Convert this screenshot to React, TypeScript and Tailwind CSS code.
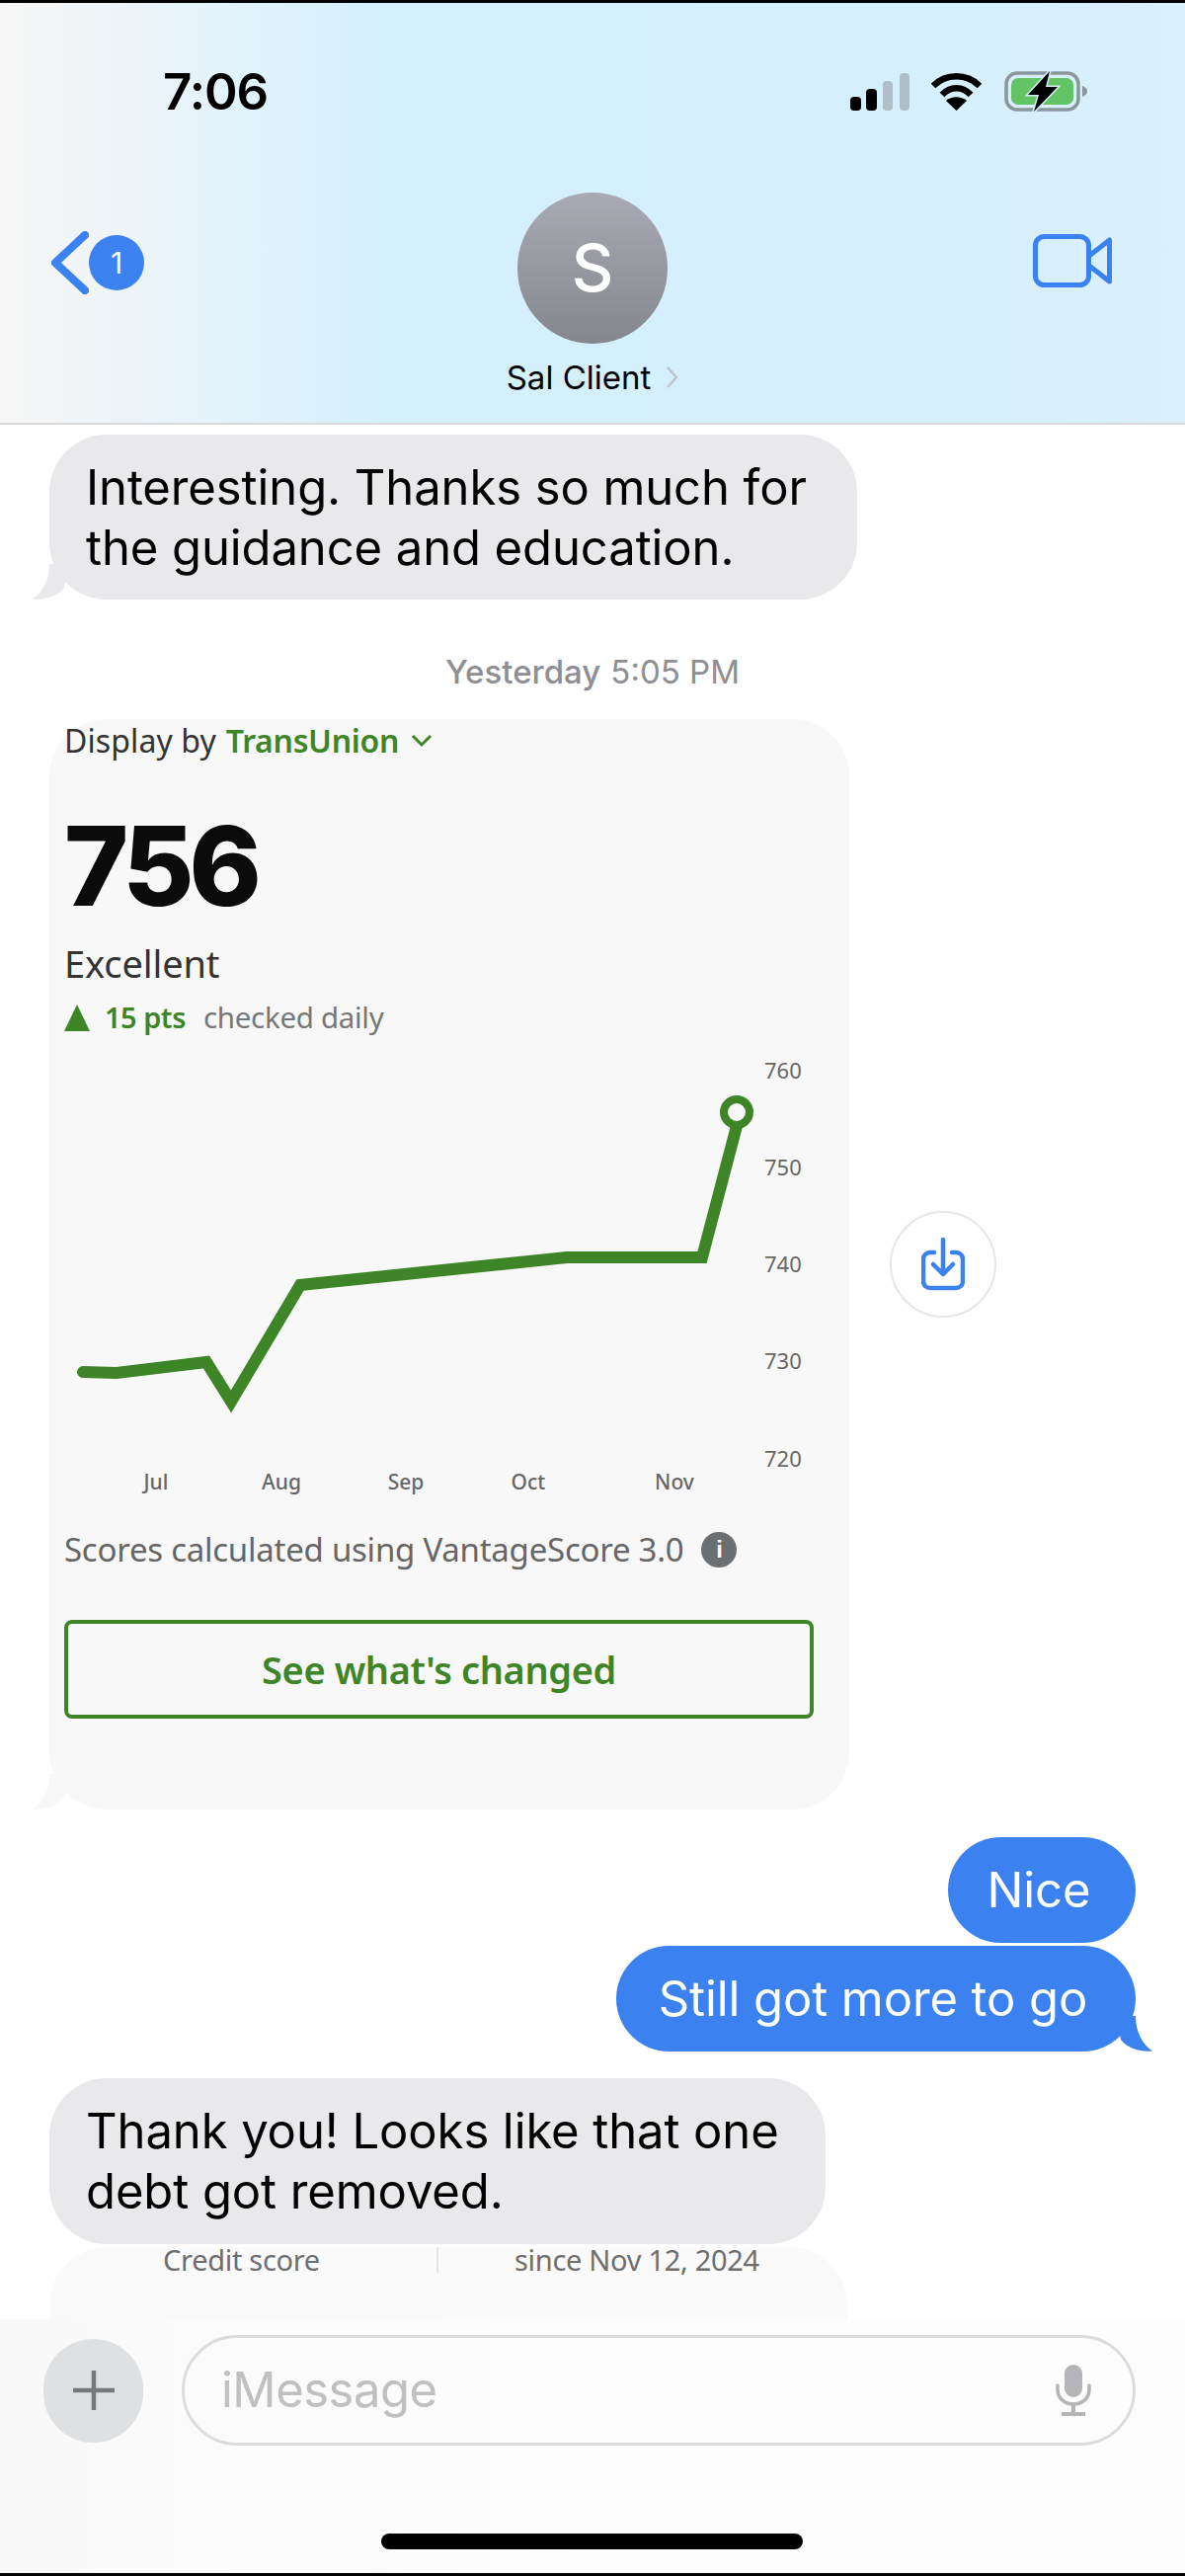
import type { ReactNode } from "react";

const GREEN = "#3d8527";

function StatusIcons() {
  return (
    <div className="flex items-center">
      <svg width="60" height="38" viewBox="0 0 60 38" className="shrink-0">
        <rect x="0" y="24" width="11" height="14" rx="4" fill="#000" />
        <rect x="16" y="16" width="11" height="22" rx="4" fill="#000" />
        <rect x="33" y="8" width="10" height="30" rx="4" fill="#aebfca" />
        <rect x="50" y="0" width="10" height="38" rx="4" fill="#aebfca" />
      </svg>
      <svg width="51" height="38" viewBox="0 0 51 38" className="ml-[22px] shrink-0">
        <path d="M2 13C15 0 36 0 49 13" fill="none" stroke="#000" strokeWidth="6.5" />
        <path d="M11 22C19 13 32 13 40 22" fill="none" stroke="#000" strokeWidth="6.5" />
        <path d="M25.500 38L15 28C21 23 30 23 36 28Z" fill="#000" />
      </svg>
      <svg width="84" height="42" viewBox="0 0 84 42" className="ml-[23px] shrink-0">
        <rect x="2" y="2" width="73" height="37" rx="11" fill="none" stroke="#8b979d" strokeWidth="3.500" />
        <rect x="7" y="7" width="63" height="27" rx="7" fill="#63c466" />
        <path d="M79 15C82 16 84 18 84 20.500C84 23 82 25 79 26Z" fill="#8b979d" />
        <path d="M46 0L24 24H35L30 41L54 16H42Z" fill="#000" stroke="#d5effc" strokeWidth="3" paintOrder="stroke" />
      </svg>
    </div>
  );
}

function Header() {
  return (
    <header className="h-[427px] shrink-0 border-b-[2px] border-[#d9d9d9] bg-[linear-gradient(90deg,#f6f6f6_0%,#f2f5f7_6%,#e4f3fb_18%,#d5f0fd_32%,#d5effc_75%,#daf0fc_100%)]">
      <div className="flex h-[116px] items-center justify-between pl-[165px] pr-[99px] pt-[64px]">
        <span className="font-['Inter',sans-serif] text-[51px] leading-[52px] font-semibold tracking-[-1px] text-black">7:06</span>
        <StatusIcons />
      </div>
      <div className="flex items-start justify-between pl-[52px] pr-[74px] pt-[76px]">
        <div className="flex w-[102px] items-center pt-[39px]">
          <svg width="38" height="64" viewBox="0 0 38 64" className="shrink-0">
            <path d="M34 4L4 32L34 60" fill="none" stroke="#3b82f0" strokeWidth="8" strokeLinecap="round" strokeLinejoin="round" />
          </svg>
          <span className="flex h-[56px] w-[56px] shrink-0 items-center justify-center rounded-full bg-[#3b82f0] font-['Inter',sans-serif] text-[30px] text-white">1</span>
        </div>
        <div className="flex flex-col items-center">
          <div className="flex h-[153px] w-[152px] items-center justify-center rounded-full bg-[linear-gradient(180deg,#a9aab3,#85878f)] font-['Inter',sans-serif] text-[66px] font-medium text-white">S</div>
          <div className="mt-[14px] flex items-center">
            <span className="font-['Inter',sans-serif] text-[33px] leading-[40px] text-black">Sal Client</span>
            <svg width="13" height="24" viewBox="0 0 13 24" className="ml-[15px] shrink-0">
              <path d="M2 2L11 12L2 22" fill="none" stroke="#bcc6cc" strokeWidth="2.500" />
            </svg>
          </div>
        </div>
        <div className="flex w-[80px] justify-end pt-[42px]">
          <svg width="80" height="54" viewBox="0 0 80 54" className="shrink-0">
            <rect x="2.500" y="2.500" width="54" height="49" rx="9" fill="none" stroke="#3b82f0" strokeWidth="5" />
            <path d="M57 22L77.500 6V48L57 32" fill="none" stroke="#3b82f0" strokeWidth="5" strokeLinejoin="round" />
          </svg>
        </div>
      </div>
    </header>
  );
}

function Tail({ color, flip }: { color: string; flip?: boolean }) {
  return (
    <svg
      width="40"
      height="36"
      viewBox="0 0 40 36"
      className={flip ? "absolute bottom-0 right-[-17px] -scale-x-100" : "absolute bottom-0 left-[-17px]"}
    >
      <path d="M17 0C17 16 10 29 0 35.500C11 36.500 24 34 32 24L36 0Z" fill={color} />
    </svg>
  );
}

function Bubble({ children, className, tail }: { children: ReactNode; className: string; tail?: boolean }) {
  return (
    <div className={`relative rounded-[58px] bg-[#e9e9eb] pl-[37px] pt-[23px] font-['Inter',sans-serif] text-[49px] leading-[61px] tracking-[-0.1px] text-black ${className}`}>
      {tail ? <Tail color="#e9e9eb" /> : null}
      {children}
    </div>
  );
}

function SentBubble({ children, className, tail }: { children: ReactNode; className: string; tail?: boolean }) {
  return (
    <div className={`relative ml-auto flex h-[107px] items-center justify-center rounded-[54px] bg-[#3b82f0] pr-[6px] font-['Inter',sans-serif] text-[49px] tracking-[-0.1px] text-white ${className}`}>
      {tail ? <Tail color="#3b82f0" flip /> : null}
      {children}
    </div>
  );
}

const YEARS = [
  { label: "760", y: 1084 },
  { label: "750", y: 1182 },
  { label: "740", y: 1280 },
  { label: "730", y: 1378 },
  { label: "720", y: 1477 },
];

const MONTHS = [
  { label: "Jul", x: 157 },
  { label: "Aug", x: 284 },
  { label: "Sep", x: 410 },
  { label: "Oct", x: 534 },
  { label: "Nov", x: 682 },
];

function ScoreChart() {
  return (
    <svg width="810" height="460" viewBox="49 1060 810 460" className="mt-[10px] -ml-[15px]">
      <path
        d="M83 1389L117 1390L208 1379L233 1419L303 1301L573 1273L710 1273L745 1140"
        fill="none"
        stroke={GREEN}
        strokeWidth="12"
        strokeLinejoin="miter"
        strokeLinecap="round"
      />
      <circle cx="745" cy="1126" r="13" fill="#f8f8f8" stroke={GREEN} strokeWidth="8" />
      {YEARS.map((t) => (
        <text key={t.label} x="773" y={t.y + 8} fontSize="22" fill="#666" fontFamily="Noto Sans, sans-serif">
          {t.label}
        </text>
      ))}
      {MONTHS.map((m) => (
        <text key={m.label} x={m.x} y="1508" fontSize="21" fontWeight="500" fill="#666" textAnchor="middle" fontFamily="Noto Sans, sans-serif">
          {m.label}
        </text>
      ))}
    </svg>
  );
}

function ScoreCard() {
  return (
    <div className="relative h-[1104px] w-[810px] shrink-0 rounded-[58px] bg-[#f8f8f8] pl-[15px] font-['Noto_Sans',sans-serif]">
      <Tail color="#f8f8f8" />
      <div className="flex h-[44px] items-center text-[32px] tracking-[0.1px] text-[#333]">
        <span>Display by</span>
        <span className="ml-[10px] font-semibold tracking-[-0.3px] text-[#3d8527]">TransUnion</span>
        <svg width="22" height="14" viewBox="0 0 22 14" className="ml-[12px] shrink-0">
          <path d="M2 2L11 11L20 2" fill="none" stroke="#3d8527" strokeWidth="3" />
        </svg>
      </div>
      <div className="mt-[49px] font-['Inter',sans-serif] text-[111px] leading-[112px] font-extrabold tracking-[-5px] text-[#0b0b0b]">756</div>
      <div className="mt-[20px] h-[44px] text-[38px] leading-[44px] tracking-[-0.1px] text-[#333]">Excellent</div>
      <div className="mt-[13px] flex h-[40px] items-center">
        <svg width="26" height="27" viewBox="0 0 26 27" className="shrink-0">
          <path d="M13 0L26 27H0Z" fill="#3d8527" />
        </svg>
        <span className="ml-[15px] text-[29px] font-semibold tracking-[-0.5px] text-[#3d8527]">15 pts</span>
        <span className="ml-[18px] text-[29.500px] tracking-[-0.3px] text-[#777]">checked daily</span>
      </div>
      <ScoreChart />
      <div className="mt-[27px] flex h-[44px] items-center text-[33px] tracking-[-0.25px] text-[#666]">
        <span>Scores calculated using VantageScore 3.0</span>
        <span className="ml-[18px] flex h-[36px] w-[36px] shrink-0 items-center justify-center rounded-full bg-[#6b6f72] font-['Liberation_Sans',sans-serif] text-[24px] font-bold text-white">i</span>
      </div>
      <div className="mt-[49px] flex h-[100px] w-[759px] items-center justify-center rounded-[8px] border-[4px] border-[#3d8527] text-[38px] font-semibold tracking-[-0.4px] text-[#3d8527]">
        See what's changed
      </div>
    </div>
  );
}

function SaveButton() {
  return (
    <div className="flex h-[108px] w-[108px] shrink-0 items-center justify-center rounded-full border-[2px] border-[#e6e6e6]">
      <svg width="44" height="54" viewBox="0 0 44 54">
        <path d="M13 15H9C5 15 2 18 2 22V44C2 48 5 51 9 51H35C39 51 42 48 42 44V22C42 18 39 15 35 15H31" fill="none" stroke="#3b82f0" strokeWidth="4.500" strokeLinecap="round" />
        <path d="M22 2V37M12 27L22 37L32 27" fill="none" stroke="#3b82f0" strokeWidth="4.500" strokeLinecap="round" strokeLinejoin="round" />
      </svg>
    </div>
  );
}

function Composer() {
  return (
    <footer className="h-[257px] shrink-0 bg-[linear-gradient(90deg,#f8f8f8_0%,#fbfbfb_12%,#fdfdfd_50%,#fdfdfd_100%)] pl-[44px] pt-[16px]">
      <div className="flex items-center">
        <div className="flex h-[105px] w-[101px] shrink-0 items-center justify-center rounded-full bg-[#dfe0e2]">
          <svg width="42" height="40" viewBox="0 0 42 40">
            <path d="M21 0V40M0 20H42" fill="none" stroke="#77787c" strokeWidth="4.500" />
          </svg>
        </div>
        <div className="ml-[39px] flex h-[112px] w-[966px] items-center justify-between rounded-full border-[3px] border-[#dcdcdc] pl-[37px] pr-[42px]">
          <span className="font-['Inter',sans-serif] text-[49px] tracking-[-0.5px] text-[#c0c0c3]">iMessage</span>
          <svg width="36" height="52" viewBox="0 0 36 52" className="shrink-0">
            <rect x="9" y="0" width="18" height="33" rx="9" fill="#b4b5b9" />
            <path d="M2 21V25C2 34 9 40 18 40C27 40 34 34 34 25V21" fill="none" stroke="#b4b5b9" strokeWidth="3.500" strokeLinecap="round" />
            <path d="M18 40V48M6 50H30" fill="none" stroke="#b4b5b9" strokeWidth="4" />
          </svg>
        </div>
      </div>
      <div className="ml-[342px] mt-[89px] h-[16px] w-[427px] rounded-full bg-black" />
    </footer>
  );
}

export default function App() {
  return (
    <div className="flex h-[2608px] w-[1200px] flex-col overflow-hidden bg-white">
      <div className="h-[3px] shrink-0 bg-black" />
      <Header />
      <main className="min-h-0 flex-1 overflow-hidden pl-[50px] pr-[50px] pt-[10px]">
        <Bubble tail className="h-[167px] w-[818px]">
          Interesting. Thanks so much for
          <br />
          the guidance and education.
        </Bubble>
        <div className="mt-[54px] flex h-[40px] items-center justify-center font-['Inter',sans-serif] text-[33px] text-[#8e8e93]">
          <span className="font-medium">Yesterday</span>
          <span className="ml-[10px]">5:05 PM</span>
        </div>
        <div className="mt-[27px] flex items-center">
          <ScoreCard />
          <div className="ml-[41px]">
            <SaveButton />
          </div>
        </div>
        <SentBubble className="mt-[28px] w-[190px]">Nice</SentBubble>
        <SentBubble tail className="mt-[3px] w-[526px]">Still got more to go</SentBubble>
        <Bubble className="mt-[27px] h-[168px] w-[786px]">
          Thank you! Looks like that one
          <br />
          debt got removed.
        </Bubble>
        <div className="mt-[3px] flex h-[73px] w-[808px] rounded-t-[58px] bg-[#fafafa] font-['Noto_Sans',sans-serif] text-[29px] leading-[26px] tracking-[-0.3px] text-[#6e6e6e]">
          <span className="ml-[115px] h-[26px] w-[279px] border-r-[2px] border-[#e4e4e4]">Credit score</span>
          <span className="ml-[77px] h-[26px]">since Nov 12, 2024</span>
        </div>
      </main>
      <Composer />
      <div className="h-[3px] shrink-0 bg-black" />
    </div>
  );
}
